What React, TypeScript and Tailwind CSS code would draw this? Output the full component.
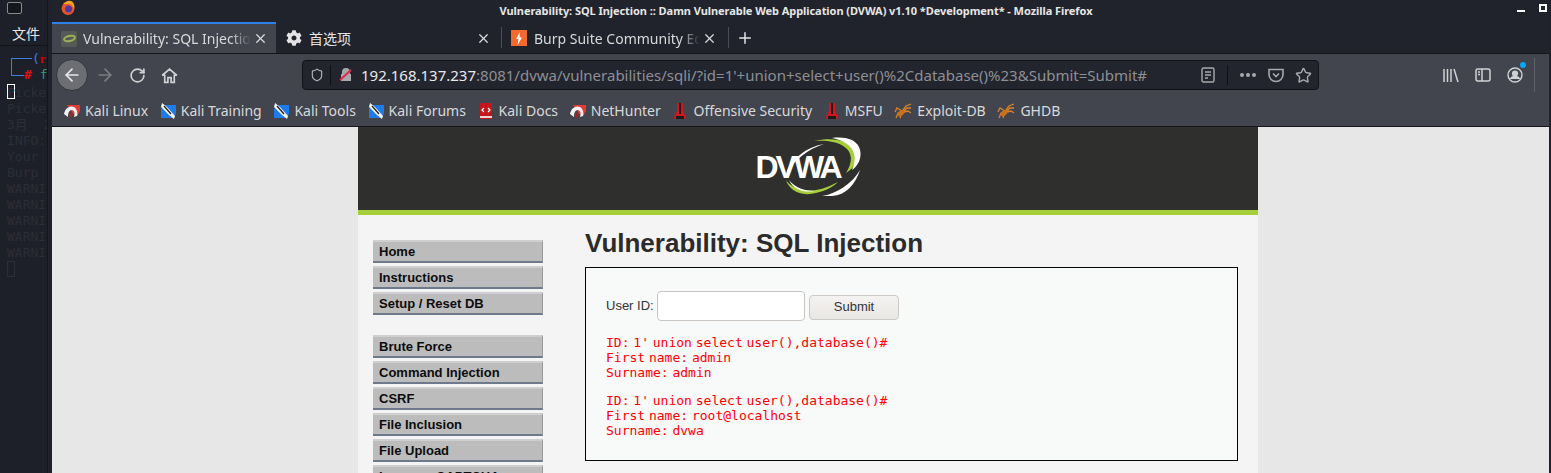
import { ArrowLeft, ArrowRight, RotateCw, X, Plus, Star, Shield } from 'lucide-react';
import { FaCog } from 'react-icons/fa';

const uiFont = "font-['Noto_Sans','Noto_Sans_CJK_SC',sans-serif]";

function KaliRed() {
  return (
    <svg width="16" height="16" viewBox="0 0 16 16" className="shrink-0">
      <path d="M3 2h13v6l-3 5-4-2-2-4z" fill="#e53935" />
      <path d="M0 11C1 5 6 2 10 4c3 2 4 6 3 9l-3 1c1-3 1-6-2-7-3 0-4 3-4 7z" fill="#f2f2f2" />
      <path d="M5 14c-1-3 1-5 3-4 1 1 1 2 0 3l-1 2z" fill="#9a2a2a" />
    </svg>
  );
}

function KaliBlue() {
  return (
    <svg width="16" height="16" viewBox="0 0 16 16" className="shrink-0">
      <path d="M4 2h12v9l-3 4H1V6z" fill="#1e7bea" />
      <path d="M2 0l5 4 8 9-1 3-5-4-8-8z" fill="#f4f4f4" />
      <path d="M4 3l7 8" stroke="#222" strokeWidth="1.3" />
    </svg>
  );
}

function KaliDocs() {
  return (
    <svg width="16" height="16" viewBox="0 0 16 16" className="shrink-0">
      <rect x="2" y="0" width="12" height="16" rx="1" fill="#c4161c" />
      <rect x="2" y="13" width="12" height="2" fill="#f0d0d0" />
      <path d="M6 5L4 7l2 2M10 5l2 2-2 2" stroke="#fff" strokeWidth="1.2" fill="none" />
    </svg>
  );
}

function RedFlask() {
  return (
    <svg width="16" height="18" viewBox="0 0 16 18" className="shrink-0">
      <path d="M5 1h6v8l3 6v2H2v-2l3-6z" fill="#d3161c" />
      <path d="M7 1h2v11H7zM4 14h8v3H4z" fill="#1b1b1b" />
    </svg>
  );
}

function Spider() {
  return (
    <svg width="18" height="16" viewBox="0 0 18 16" className="shrink-0" fill="none" stroke="#d9822b" strokeWidth="1.3">
      <path d="M8 8L3 5 1 9M8 9l-4 1-2 5M9 9l-2 3-1 3M9 7l3-4 5-2M10 8l3-3 4 0M10 9l4-1 3 2" />
      <ellipse cx="7" cy="10" rx="4" ry="2.500" fill="#c9701c" stroke="none" transform="rotate(-35 7 10)" />
    </svg>
  );
}

const bookmarks = [
  { label: 'Kali Linux', icon: <KaliRed /> },
  { label: 'Kali Training', icon: <KaliBlue /> },
  { label: 'Kali Tools', icon: <KaliBlue /> },
  { label: 'Kali Forums', icon: <KaliBlue /> },
  { label: 'Kali Docs', icon: <KaliDocs /> },
  { label: 'NetHunter', icon: <KaliRed /> },
  { label: 'Offensive Security', icon: <RedFlask /> },
  { label: 'MSFU', icon: <RedFlask /> },
  { label: 'Exploit-DB', icon: <Spider /> },
  { label: 'GHDB', icon: <Spider /> },
];

const termLines = ['Picke', 'Picke', '3月  2', 'INFO:', 'Your', 'Burp', 'WARNI', 'WARNI', 'WARNI', 'WARNI', 'WARNI'];

function Terminal() {
  return (
    <div className="w-[48px] shrink-0 bg-[#1e2029] border-r border-[#14151b] overflow-hidden">
      <div className="h-[46px] border-b border-[#14151b] pl-[7px] pt-[2px]">
        <div className="w-[15px] h-[12px] border border-[#8a8a8a] rounded-[2px] bg-[#16171d]" />
        <div className={`${uiFont} text-[14px] leading-[20px] text-[#e8e8e8] mt-[10px] ml-[5px] whitespace-nowrap`}>文件</div>
      </div>
      <div className="pl-[7px] pt-[5px] font-['DejaVu_Sans_Mono','Noto_Sans_CJK_SC',monospace] text-[13px] leading-[16px] whitespace-pre">
        <div className="h-[16px] relative">
          <span className="absolute left-[4px] top-[7px] w-[21px] h-[9px] border-l border-t border-[#3f7fe0]" />
          <span className="pl-[25px] text-[#3f7fe0]">(<b className="text-[#c00] font-['Liberation_Serif',serif]">r</b></span>
        </div>
        <div className="h-[16px] relative">
          <span className="absolute left-[4px] top-0 w-[13px] h-[9px] border-l border-b border-[#3f7fe0]" />
          <span className="pl-[17px]"><b className="text-[#e01010]">#</b><span className="text-[#2f9e78]"> f</span></span>
        </div>
        <div className="h-[15px] w-[8px] mt-[1px] border border-white" />
        {termLines.map((line, i) => (
          <div key={i} className={`h-[16px] text-[#2b2e37] ${i < 1 ? '-mt-[14px]' : ''}`}>{line}</div>
        ))}
        <div className="h-[16px] w-[8px] border border-[#2b2e37]" />
      </div>
    </div>
  );
}

function Tabs() {
  return (
    <div className={`${uiFont} h-[32px] flex items-stretch bg-[#20232c] text-[14px] border-b border-[#14151b]`}>
      <div className="w-[224px] bg-[#42454e] border-t-2 border-[#2f7fe6] flex items-center pl-[9px] pr-[4px] text-[#d8d9dc]">
        <div className="w-[16px] h-[16px] bg-[#555a55] rounded-[2px] flex items-center justify-center shrink-0">
          <div className="w-[13px] h-[7px] rounded-[50%] border-2 border-[#9fb05a] -rotate-12" />
        </div>
        <span className="ml-[6px] w-[168px] overflow-hidden whitespace-nowrap [mask-image:linear-gradient(to_right,black_88%,transparent)]">Vulnerability: SQL Injection</span>
        <X size={15} strokeWidth={2} className="ml-[2px] text-[#d8d9dc] shrink-0" />
      </div>
      <div className="w-[226px] flex items-center pl-[10px] pr-[10px] pt-[1px] text-[#e4e4e6] border-r border-[#4a4d55] my-[5px]">
        <FaCog size={16} className="shrink-0" />
        <span className="ml-[7px] flex-1">首选项</span>
        <X size={15} strokeWidth={2} className="text-[#d8d9dc]" />
      </div>
      <div className="w-[227px] flex items-center pl-[9px] pr-[10px] pt-[1px] text-[#d8d9dc] border-r border-[#4a4d55] my-[5px]">
        <div className="w-[16px] h-[16px] bg-[#f26a2e] flex items-center justify-center shrink-0">
          <svg width="8" height="13" viewBox="0 0 8 13"><path d="M5 0L1 7h2.500L2.500 13 7 5.500H4.500z" fill="#fff" /></svg>
        </div>
        <span className="ml-[7px] w-[166px] overflow-hidden whitespace-nowrap [mask-image:linear-gradient(to_right,black_88%,transparent)]">Burp Suite Community Edition</span>
        <X size={15} strokeWidth={2} className="ml-[2px] shrink-0" />
      </div>
      <div className="flex items-center pl-[7px] pt-[1px] text-[#e4e4e6]">
        <Plus size={18} strokeWidth={2} />
      </div>
    </div>
  );
}

function Toolbar() {
  return (
    <div className={`${uiFont} h-[38px] flex items-center bg-[#42454e] pl-[4px] pr-[14px] pt-[4px] text-[#d0d1d4]`}>
      <div className="w-[32px] h-[32px] rounded-full bg-[#6c6e74] border border-[#33353c] flex items-center justify-center shrink-0">
        <ArrowLeft size={20} strokeWidth={2} className="text-[#e8e8e8]" />
      </div>
      <ArrowRight size={20} strokeWidth={2} className="ml-[7px] text-[#7b7d83] shrink-0" />
      <RotateCw size={17} strokeWidth={2.4} className="ml-[14px] shrink-0" />
      <svg width="17" height="17" viewBox="0 0 16 16" className="ml-[15px] shrink-0" fill="none" stroke="currentColor" strokeWidth="1.6">
        <path d="M1 8l7-6 7 6M3.500 7v7.500h3V10h3v4.500h3V7" />
      </svg>
      <div className="ml-[124px] w-[1017px] h-[30px] shrink-0 bg-[#23252e] border border-[#111217] rounded-[4px] flex items-center pl-[7px] pr-[6px] text-[15px] whitespace-nowrap">
        <Shield size={14} strokeWidth={2} className="text-[#b0b1b5] shrink-0" />
        <div className="w-px h-[20px] bg-[#0f1014] ml-[6px] shrink-0" />
        <svg width="14" height="14" viewBox="0 0 14 14" className="ml-[8px] shrink-0">
          <path d="M3 6V4a4 4 0 0 1 8 0v2h1v7H2V6z" fill="#a8a9ad" />
          <path d="M1 12L12 2" stroke="#e22850" strokeWidth="2" />
        </svg>
        <span className="ml-[8px] text-[#e8e9ea]">192.168.137.237<span className="text-[#8d8f95]">:8081/dvwa/vulnerabilities/sqli/?id=1'+union+select+user()%2Cdatabase()%23&amp;Submit=Submit#</span></span>
        <div className="flex-1" />
        <svg width="14" height="16" viewBox="0 0 14 16" className="shrink-0 text-[#a8a9ad]" fill="none" stroke="currentColor" strokeWidth="1.4">
          <rect x="1" y="1" width="12" height="14" rx="1.500" />
          <path d="M4 5h6M4 8h6M4 11h3" />
        </svg>
        <div className="w-px h-[20px] bg-[#0f1014] ml-[12px] shrink-0" />
        <div className="ml-[12px] flex gap-[2px] shrink-0">
          <span className="w-[4px] h-[4px] rounded-full bg-[#a8a9ad]" />
          <span className="w-[4px] h-[4px] rounded-full bg-[#a8a9ad]" />
          <span className="w-[4px] h-[4px] rounded-full bg-[#a8a9ad]" />
        </div>
        <svg width="16" height="15" viewBox="0 0 16 15" className="ml-[12px] shrink-0 text-[#a8a9ad]" fill="none" stroke="currentColor" strokeWidth="1.6">
          <path d="M1 1.500h14v5a7 7 0 0 1-14 0z" />
          <path d="M5 5.500l3 3 3-3" />
        </svg>
        <Star size={17} strokeWidth={2} className="ml-[11px] shrink-0 text-[#a8a9ad]" />
      </div>
      <div className="flex-1" />
      <svg width="16" height="15" viewBox="0 0 16 15" className="shrink-0" fill="none" stroke="currentColor" strokeWidth="1.500">
        <path d="M1 1v13M4.500 1v13M8 1v13M11 1l4 13" />
      </svg>
      <svg width="16" height="14" viewBox="0 0 16 14" className="ml-[16px] shrink-0" fill="none" stroke="currentColor" strokeWidth="1.500">
        <rect x="1" y="1" width="14" height="12" rx="2" />
        <path d="M7 1v12M3 4h2M3 6.500h2" />
      </svg>
      <div className="relative ml-[16px] w-[16px] h-[16px] shrink-0">
        <svg width="16" height="16" viewBox="0 0 16 16" fill="none" stroke="currentColor" strokeWidth="1.400">
          <circle cx="8" cy="8" r="7" />
          <circle cx="8" cy="6.500" r="2.400" fill="currentColor" />
          <path d="M3.500 12c1-2 2.500-2.500 4.500-2.500s3.500.5 4.500 2.500" fill="currentColor" />
        </svg>
        <span className="absolute -top-[5px] -right-[3px] w-[6px] h-[6px] rounded-full bg-[#0aa5f5]" />
      </div>
      <div className="ml-[11px] w-px h-[34px] bg-[#5f6168] shrink-0" />
    </div>
  );
}

function BookmarkBar() {
  return (
    <div className={`${uiFont} h-[35px] flex items-center gap-[11.7px] bg-[#42454e] pl-[12px] pt-[3px] text-[14px] text-[#d8d9dc] border-b border-[#14151b] whitespace-nowrap`}>
      {bookmarks.map((b) => (
        <div key={b.label} className="flex items-center gap-[5px]">
          {b.icon}
          <span>{b.label}</span>
        </div>
      ))}
    </div>
  );
}

function DvwaLogo() {
  return (
    <div className="relative w-[105px] h-[60px]">
      <span className="absolute left-0 top-[10px] font-['Liberation_Sans',sans-serif] font-bold text-[32px] leading-[40px] tracking-[-3px] text-white">DVWA</span>
      <svg width="105" height="60" viewBox="0 0 105 60" className="absolute left-0 top-0">
        <path d="M58 4C75 0 92 2 100 14c4 7 0 16-10 22 5-8 7-16 2-23C85 5 72 3 58 4z" fill="#a6ce39" />
        <path d="M76 1c14-2 26 2 28 12 2 8-2 16-8 20 3-7 4-14 0-21C92 6 85 3 76 1z" fill="#fff" />
        <path d="M30 43c3 10 14 17 30 13 10-2 18-7 22-11-8 4-20 10-32 8-10-1-17-5-20-10z" fill="#a6ce39" />
        <path d="M66 59c14-2 30-12 38-26-5 15-14 25-28 26z" fill="#fff" />
        <path d="M33 43c6 8 16 11 26 11-10 2-22-1-26-11zM30 37c4-14 20-27 38-30-16 5-30 16-38 30z" fill="#fff" />
      </svg>
    </div>
  );
}

const navBlocks = [
  ['Home', 'Instructions', 'Setup / Reset DB'],
  ['Brute Force', 'Command Injection', 'CSRF', 'File Inclusion', 'File Upload', 'Insecure CAPTCHA'],
];

function DvwaPage() {
  const resultLines = [
    ['ID: 1\' union select user(),database()#', 'First name: admin', 'Surname: admin'],
    ['ID: 1\' union select user(),database()#', 'First name: root@localhost', 'Surname: dvwa'],
  ];
  return (
    <div className="flex-1 bg-[#e7e7e7] overflow-hidden">
      <div className="ml-[306px] w-[900px] bg-[#f4f4f4] font-['Liberation_Sans',Arial,sans-serif] min-h-[400px]">
        <div className="h-[83px] bg-[#2f2f2e] flex items-start justify-center pt-[10px]">
          <DvwaLogo />
        </div>
        <div className="h-[5px] bg-[#a6ce39]" />
        <div className="flex pl-[15px] pt-[25px]">
          <div className="w-[170px] shrink-0 flex flex-col gap-[20px]">
            {navBlocks.map((block, i) => (
              <div key={i} className="flex flex-col gap-[3px]">
                {block.map((item) => (
                  <div key={item} className="h-[23px] bg-[#bcbcbc] border-t-2 border-b-2 border-t-[#cfcfcf] border-b-[#6d7a8c] border-r border-r-[#9a9a9a] pl-[6px] text-[13px] leading-[19px] font-bold text-[#0c0c0c]">
                    {item}
                  </div>
                ))}
              </div>
            ))}
          </div>
          <div className="ml-[42px] w-[653px] shrink-0 -mt-[12px]">
            <h1 className="text-[26px] leading-[30px] font-bold text-[#2b2b2b]">Vulnerability: SQL Injection</h1>
            <div className="mt-[9px] h-[194px] border border-black bg-[#f8f9f9] pl-[20px] pt-[23px]">
              <div className="flex items-center text-[13px] text-[#333]">
                <span className="w-[51px]">User ID:</span>
                <div className="w-[148px] h-[30px] bg-white border border-[#c9c6c1] rounded-[4px]" />
                <div className="ml-[4px] w-[90px] h-[25px] mt-[2px] flex items-center justify-center rounded-[4px] border border-[#cdcac5] bg-gradient-to-b from-[#f4f3f1] to-[#e9e7e4] text-[#333]">Submit</div>
              </div>
              <div className="mt-[14px] flex flex-col gap-[13px] font-['DejaVu_Sans_Mono',monospace] text-[13px] leading-[15px] text-[#ff0000] [word-spacing:-4px] whitespace-pre">
                {resultLines.map((group, i) => (
                  <div key={i}>
                    {group.map((line, j) => (
                      <div key={j}>{line}</div>
                    ))}
                  </div>
                ))}
              </div>
            </div>
          </div>
        </div>
      </div>
    </div>
  );
}

export default function App() {
  return (
    <div className="w-[1551px] h-[473px] flex overflow-hidden bg-[#1e2029]">
      <Terminal />
      <div className="flex-1 flex flex-col min-w-0 pl-[4px] pr-[2px] bg-[#1f222a]">
        <div className={`${uiFont} h-[22px] shrink-0 flex items-center relative bg-[#20232c] pr-[9px] text-[11px] tracking-[-0.06px] font-bold text-[#e6e6e6]`}>
          <svg width="16" height="16" viewBox="0 0 16 16" className="absolute left-[8px] top-0">
            <circle cx="8" cy="8.500" r="6.500" fill="#e8552c" />
            <circle cx="8.500" cy="9" r="3.500" fill="#4a3aa8" />
            <path d="M3 4C5 2 8 0 11 1c3 1 4 5 3 8-1-3-3-5-6-5-2 0-4 0-5 0z" fill="#f7a11d" />
          </svg>
          <span className="w-full text-center whitespace-nowrap">Vulnerability: SQL Injection :: Damn Vulnerable Web Application (DVWA) v1.10 *Development* - Mozilla Firefox</span>
          <span className="absolute right-[24px] top-[10px] w-[8px] h-[2px] bg-white" />
          <span className="absolute right-[2px] top-[4px] w-[8px] h-[8px] border-2 border-white" />
        </div>
        <Tabs />
        <Toolbar />
        <BookmarkBar />
        <DvwaPage />
      </div>
    </div>
  );
}
